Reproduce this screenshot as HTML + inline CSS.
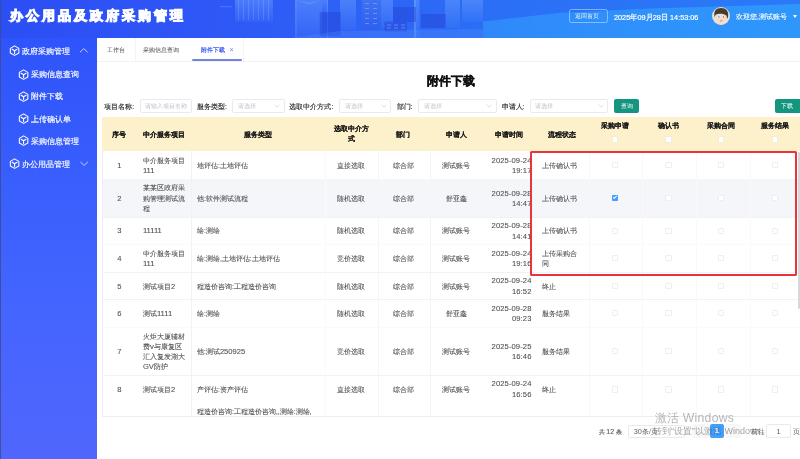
<!DOCTYPE html>
<html><head><meta charset="utf-8">
<style>
*{margin:0;padding:0;box-sizing:border-box}
html,body{width:800px;height:459px;overflow:hidden;background:#fff;font-family:"Liberation Sans",sans-serif;color:#606266}
.a{position:absolute;white-space:nowrap}
#hdr{position:absolute;left:0;top:0;width:800px;height:38px;overflow:hidden}
#side{position:absolute;left:0;top:38px;width:97px;height:421px;background:linear-gradient(180deg,#2e54fb 0%,#3a60fd 40%,#4565ff 65%,#5066fc 100%)}
.n{font-size:1.12em;line-height:1px}
.side-item{position:absolute;color:#fff;font-size:7.95px;line-height:10px;-webkit-text-stroke:0.15px #fff}
#main{position:absolute;left:97px;top:38px;width:703px;height:421px;background:#fff;overflow:hidden;will-change:transform}
#hdr,#side{will-change:transform}
</style></head><body>
<div id="hdr">
<svg class="a" style="left:0;top:0" width="800" height="38" viewBox="0 0 800 38">
<defs>
<linearGradient id="hg" x1="0" y1="0" x2="1" y2="0">
<stop offset="0" stop-color="#2c4ef5"/><stop offset="0.25" stop-color="#2f56f6"/><stop offset="0.5" stop-color="#2d66f7"/><stop offset="0.62" stop-color="#2a6ff6"/><stop offset="1" stop-color="#2a7af8"/>
</linearGradient>
<linearGradient id="hl" x1="0" y1="0" x2="1" y2="0" gradientUnits="objectBoundingBox">
<stop offset="0" stop-color="#2f88fa"/><stop offset="0.4" stop-color="#2f90fb"/><stop offset="1" stop-color="#2e97fc"/>
</linearGradient>
<linearGradient id="fade" x1="0" y1="0" x2="0" y2="1">
<stop offset="0" stop-color="#70a4ff" stop-opacity="0.45"/><stop offset="1" stop-color="#70a4ff" stop-opacity="0.08"/>
</linearGradient>
<filter id="bl" x="-5%" y="-50%" width="110%" height="200%"><feGaussianBlur stdDeviation="0.6"/></filter>
</defs>
<rect width="800" height="38" fill="url(#hg)"/>
<polygon points="483,38 483,21.5 560,12.7 650,8.5 800,4 800,38" fill="url(#hl)"/>
<g filter="url(#bl)">
<g fill="url(#fade)">
<rect x="235" y="0" width="38" height="22"/>
<rect x="295" y="0" width="27" height="38"/>
<rect x="322" y="0" width="6" height="14"/>
<rect x="340" y="0" width="16" height="30"/>
<rect x="362" y="0" width="19" height="30"/>
<rect x="381" y="0" width="12" height="28"/>
<rect x="414" y="0" width="5.5" height="38"/>
<rect x="445" y="0" width="15" height="28"/>
<rect x="462" y="0" width="21" height="22"/>
</g>
<g fill="#86b4ff" opacity="0.3">
<rect x="238" y="0" width="1" height="20"/><rect x="243" y="0" width="1" height="20"/><rect x="248" y="0" width="1" height="20"/><rect x="253" y="0" width="1" height="20"/><rect x="258" y="0" width="1" height="20"/><rect x="263" y="0" width="1" height="20"/><rect x="268" y="0" width="1" height="20"/>
<rect x="220" y="6" width="12" height="1.2"/>
<rect x="295.5" y="0" width="1" height="38"/><rect x="327" y="0" width="1" height="38"/>
<polygon points="296,0 309,4.5 322,0 309,2.5"/>
<rect x="414" y="0" width="2" height="38"/>
</g>
<g fill="#2243d0" opacity="0.45">
<rect x="319.7" y="12" width="21" height="24"/>
<rect x="393" y="7" width="23" height="15"/>
<rect x="421" y="14" width="24.7" height="14"/>
<rect x="384.5" y="21.7" width="22.5" height="9.8"/>
</g>
<g fill="#1f45d8" opacity="0.25">
<rect x="362" y="0" width="19" height="30"/>
</g>
<g fill="#9cc4ff" opacity="0.45">
<rect x="365" y="3" width="4" height="1"/><rect x="373" y="3" width="4" height="1"/>
<rect x="365" y="8" width="4" height="1"/><rect x="373" y="8" width="4" height="1"/>
<rect x="365" y="13" width="4" height="1"/><rect x="373" y="13" width="4" height="1"/>
<rect x="365" y="18" width="4" height="1"/><rect x="373" y="18" width="4" height="1"/>
<rect x="365" y="23" width="4" height="1"/><rect x="373" y="23" width="4" height="1"/>
<rect x="387" y="24.5" width="4" height="1"/><rect x="394" y="24.5" width="4" height="1"/><rect x="401" y="24.5" width="4" height="1"/>
<rect x="387" y="27.5" width="4" height="1"/><rect x="394" y="27.5" width="4" height="1"/><rect x="401" y="27.5" width="4" height="1"/>
</g>
<polygon points="290,38 340,31 483,29 483,38" fill="#5a96ff" opacity="0.25"/>
</g>
<rect x="0" y="0" width="1.1" height="38" fill="#3a4a8a" opacity="0.7"/>
</svg>
<div class="a" style="left:9.8px;top:5.8px;font-size:13px;line-height:20px;color:#fff;font-weight:bold;letter-spacing:3.05px;-webkit-text-stroke:1.05px #fff">办公用品及政府采购管理</div>
<div class="a" style="left:568.5px;top:9px;width:39.5px;height:14.3px;border:0.8px solid rgba(255,255,255,0.42);border-radius:2.5px"></div>
<div class="a" style="left:575.4px;top:11.3px;font-size:6.35px;line-height:10px;color:rgba(255,255,255,0.92)">返回首页</div>
<div class="a" style="left:614.2px;top:12.6px;font-size:8.1px;line-height:10px;color:#fff;-webkit-text-stroke:0.2px #fff;transform:scaleX(0.9);transform-origin:0 0">2025年09月28日 14:53:06</div>
<svg class="a" style="left:711.6px;top:7px" width="18" height="18" viewBox="0 0 20 20">
<defs><clipPath id="av"><circle cx="10" cy="10" r="10"/></clipPath></defs>
<g clip-path="url(#av)">
<rect width="20" height="20" fill="#e4e0dc"/>
<path d="M3.5 10 Q3.5 18 10 20 Q16.5 19 16.5 10 Z" fill="#f2dccc"/>
<circle cx="16.3" cy="11.5" r="1.6" fill="#efc7a8"/>
<path d="M2.5 9 Q2 1 10 1 Q18.5 1 18 10 L17.4 13 L16 9.5 Q13 8 11 7.6 Q7 7 4 8.5 L3 11 Z" fill="#4a3a2c"/>
<ellipse cx="7.7" cy="11" rx="1.6" ry="1" fill="#fff"/><ellipse cx="12.6" cy="11" rx="1.6" ry="1" fill="#fff"/>
<circle cx="7.7" cy="11" r="0.65" fill="#2a2a2a"/><circle cx="12.6" cy="11" r="0.65" fill="#2a2a2a"/>
<ellipse cx="10.2" cy="15.2" rx="1.6" ry="1" fill="#f0a08a"/>
</g>
</svg>
<div class="a" style="left:736px;top:11.6px;font-size:6.8px;line-height:10px;color:#fff;-webkit-text-stroke:0.1px #fff">欢迎您,测试账号</div>
<div class="a" style="left:793px;top:15px;width:0;height:0;border-left:2.5px solid transparent;border-right:2.5px solid transparent;border-top:3px solid #fff"></div>
</div>
<div id="side">
<svg class="a" style="left:9.2px;top:7.2px" width="11.2" height="11.2" viewBox="0 0 20 20"><path d="M10 1.6 L17.6 6 V14.4 L10 18.6 L2.4 14.4 V6 Z" fill="none" stroke="#fff" stroke-width="1.9" stroke-linejoin="round"/><path d="M5.6 7.6 L10 10.4 L14.4 7.6 M10 10.4 V15" fill="none" stroke="#fff" stroke-width="1.9" stroke-linecap="round" stroke-linejoin="round"/></svg>
<div class="side-item a" style="left:21.7px;top:8.8px">政府采购管理</div>
<svg class="a" style="left:79px;top:8px" width="10" height="8" viewBox="0 0 10 8"><polyline points="1,6.2 4.8,2.6 8.6,6.2" fill="none" stroke="rgba(255,255,255,0.9)" stroke-width="0.8"/></svg>
<svg class="a" style="left:18.0px;top:30.799999999999994px" width="11.2" height="11.2" viewBox="0 0 20 20"><path d="M10 1.6 L17.6 6 V14.4 L10 18.6 L2.4 14.4 V6 Z" fill="none" stroke="#fff" stroke-width="1.9" stroke-linejoin="round"/><path d="M5.6 7.6 L10 10.4 L14.4 7.6 M10 10.4 V15" fill="none" stroke="#fff" stroke-width="1.9" stroke-linecap="round" stroke-linejoin="round"/></svg>
<div class="side-item a" style="left:30.5px;top:32.39999999999999px">采购信息查询</div>
<svg class="a" style="left:18.0px;top:52.8px" width="11.2" height="11.2" viewBox="0 0 20 20"><path d="M10 1.6 L17.6 6 V14.4 L10 18.6 L2.4 14.4 V6 Z" fill="none" stroke="#fff" stroke-width="1.9" stroke-linejoin="round"/><path d="M5.6 7.6 L10 10.4 L14.4 7.6 M10 10.4 V15" fill="none" stroke="#fff" stroke-width="1.9" stroke-linecap="round" stroke-linejoin="round"/></svg>
<div class="side-item a" style="left:30.5px;top:54.39999999999999px">附件下载</div>
<svg class="a" style="left:18.0px;top:75.0px" width="11.2" height="11.2" viewBox="0 0 20 20"><path d="M10 1.6 L17.6 6 V14.4 L10 18.6 L2.4 14.4 V6 Z" fill="none" stroke="#fff" stroke-width="1.9" stroke-linejoin="round"/><path d="M5.6 7.6 L10 10.4 L14.4 7.6 M10 10.4 V15" fill="none" stroke="#fff" stroke-width="1.9" stroke-linecap="round" stroke-linejoin="round"/></svg>
<div class="side-item a" style="left:30.5px;top:76.6px">上传确认单</div>
<svg class="a" style="left:18.0px;top:97.00000000000001px" width="11.2" height="11.2" viewBox="0 0 20 20"><path d="M10 1.6 L17.6 6 V14.4 L10 18.6 L2.4 14.4 V6 Z" fill="none" stroke="#fff" stroke-width="1.9" stroke-linejoin="round"/><path d="M5.6 7.6 L10 10.4 L14.4 7.6 M10 10.4 V15" fill="none" stroke="#fff" stroke-width="1.9" stroke-linecap="round" stroke-linejoin="round"/></svg>
<div class="side-item a" style="left:30.5px;top:98.60000000000001px">采购信息管理</div>
<svg class="a" style="left:9.2px;top:120.2px" width="11.2" height="11.2" viewBox="0 0 20 20"><path d="M10 1.6 L17.6 6 V14.4 L10 18.6 L2.4 14.4 V6 Z" fill="none" stroke="#fff" stroke-width="1.9" stroke-linejoin="round"/><path d="M5.6 7.6 L10 10.4 L14.4 7.6 M10 10.4 V15" fill="none" stroke="#fff" stroke-width="1.9" stroke-linecap="round" stroke-linejoin="round"/></svg>
<div class="side-item a" style="left:21.7px;top:121.8px">办公用品管理</div>
<svg class="a" style="left:79px;top:121px" width="10" height="8" viewBox="0 0 10 8"><polyline points="1.4,3 5.1,6.4 8.8,3" fill="none" stroke="rgba(255,255,255,0.9)" stroke-width="0.8"/></svg>
<div class="a" style="left:0;top:0;width:1.1px;height:421px;background:#3c4a8c;opacity:0.8"></div>
</div>
<div id="main">
<div class="a" style="left:0;top:22.6px;width:703px;height:0.7px;background:#f1f2f4"></div>
<div class="a" style="left:9.50px;top:6.60px;font-size:6.4px;line-height:10px;color:#444">工作台</div>
<div class="a" style="left:38.00px;top:0.00px;width:0.70px;height:23.00px;background:#f4f4f4"></div>
<div class="a" style="left:46.00px;top:6.60px;font-size:6.2px;line-height:10px;color:#444">采购信息查询</div>
<div class="a" style="left:103.50px;top:6.60px;font-size:6.2px;line-height:10px;color:#3d5cf0;font-weight:bold">附件下载</div>
<div class="a" style="left:132.50px;top:6.60px;font-size:7px;line-height:10px;color:#6a7cf0">×</div>
<div class="a" style="left:94.60px;top:20.90px;width:50.60px;height:1.70px;background:#7084de;border-radius:1px"></div>
<div class="a" style="left:146.00px;top:0.00px;width:0.70px;height:23.00px;background:#f4f4f4"></div>
<div class="a" style="left:329.90px;top:36.30px;font-size:12.2px;line-height:14px;color:#111;font-weight:bold;-webkit-text-stroke:0.35px #111">附件下载</div>
<div class="a" style="left:7.30px;top:63.50px;font-size:6.8px;line-height:10px;color:#262626;-webkit-text-stroke:0.15px #333">项目名称:</div>
<div class="a" style="left:43.30px;top:61.20px;width:51.70px;height:14.00px;border:0.8px solid #e9eaee;border-radius:2px;background:#fff"></div>
<div class="a" style="left:47.50px;top:63.30px;font-size:6.2px;line-height:10px;color:#c0c4cc">请输入项目名称</div>
<div class="a" style="left:100.10px;top:63.50px;font-size:6.8px;line-height:10px;color:#262626;-webkit-text-stroke:0.15px #333">服务类型:</div>
<div class="a" style="left:135.20px;top:61.20px;width:52.50px;height:14.00px;border:0.8px solid #e9eaee;border-radius:2px;background:#fff"></div>
<div class="a" style="left:140.70px;top:63.30px;font-size:6.2px;line-height:10px;color:#c0c4cc">请选择</div>
<svg class="a" style="left:176.70px;top:66.30px" width="6" height="4" viewBox="0 0 6 4"><polyline points="0.6,0.8 3,3.1 5.4,0.8" fill="none" stroke="#c6c8cc" stroke-width="0.6"/></svg>
<div class="a" style="left:192.40px;top:63.50px;font-size:6.8px;line-height:10px;color:#262626;-webkit-text-stroke:0.15px #333">选取中介方式:</div>
<div class="a" style="left:242.40px;top:61.20px;width:52.10px;height:14.00px;border:0.8px solid #e9eaee;border-radius:2px;background:#fff"></div>
<div class="a" style="left:247.90px;top:63.30px;font-size:6.2px;line-height:10px;color:#c0c4cc">请选择</div>
<svg class="a" style="left:283.50px;top:66.30px" width="6" height="4" viewBox="0 0 6 4"><polyline points="0.6,0.8 3,3.1 5.4,0.8" fill="none" stroke="#c6c8cc" stroke-width="0.6"/></svg>
<div class="a" style="left:299.60px;top:63.50px;font-size:6.8px;line-height:10px;color:#262626;-webkit-text-stroke:0.15px #333">部门:</div>
<div class="a" style="left:321.20px;top:61.20px;width:78.40px;height:14.00px;border:0.8px solid #e9eaee;border-radius:2px;background:#fff"></div>
<div class="a" style="left:326.70px;top:63.30px;font-size:6.2px;line-height:10px;color:#c0c4cc">请选择</div>
<svg class="a" style="left:388.60px;top:66.30px" width="6" height="4" viewBox="0 0 6 4"><polyline points="0.6,0.8 3,3.1 5.4,0.8" fill="none" stroke="#c6c8cc" stroke-width="0.6"/></svg>
<div class="a" style="left:404.50px;top:63.50px;font-size:6.8px;line-height:10px;color:#262626;-webkit-text-stroke:0.15px #333">申请人:</div>
<div class="a" style="left:432.70px;top:61.20px;width:78.80px;height:14.00px;border:0.8px solid #e9eaee;border-radius:2px;background:#fff"></div>
<div class="a" style="left:438.20px;top:63.30px;font-size:6.2px;line-height:10px;color:#c0c4cc">请选择</div>
<svg class="a" style="left:500.50px;top:66.30px" width="6" height="4" viewBox="0 0 6 4"><polyline points="0.6,0.8 3,3.1 5.4,0.8" fill="none" stroke="#c6c8cc" stroke-width="0.6"/></svg>
<div class="a" style="left:516.70px;top:61.00px;width:25.70px;height:14.00px;background:#14957f;border-radius:2px"></div>
<div class="a" style="left:516.70px;top:63.00px;width:25.7px;text-align:center;font-size:6.2px;line-height:10px;color:#fff">查询</div>
<div class="a" style="left:677.80px;top:61.00px;width:30.00px;height:14.00px;background:#14957f;border-radius:2px"></div>
<div class="a" style="left:677.80px;top:63.00px;width:25px;text-align:center;font-size:6.2px;line-height:10px;color:#fff">下载</div>
<div class="a" style="left:5.40px;top:79.20px;width:697.60px;height:34.20px;background:#fdf1cb"></div>
<div class="a" style="left:5.40px;top:113.30px;width:697.60px;height:265.50px;border-left:0.7px solid #eceef2;border-bottom:0.7px solid #eceef2;background:#fff"></div>
<div class="a" style="left:5.40px;top:140.55px;width:697.60px;height:0.70px;background:#f1f2f5"></div>
<div class="a" style="left:6.10px;top:140.90px;width:696.90px;height:38.10px;background:#f4f6fa"></div>
<div class="a" style="left:5.40px;top:178.65px;width:697.60px;height:0.70px;background:#f1f2f5"></div>
<div class="a" style="left:5.40px;top:206.05px;width:697.60px;height:0.70px;background:#f9fafb"></div>
<div class="a" style="left:5.40px;top:233.75px;width:697.60px;height:0.70px;background:#f1f2f5"></div>
<div class="a" style="left:5.40px;top:261.15px;width:697.60px;height:0.70px;background:#f1f2f5"></div>
<div class="a" style="left:5.40px;top:288.65px;width:697.60px;height:0.70px;background:#f9fafb"></div>
<div class="a" style="left:5.40px;top:337.15px;width:697.60px;height:0.70px;background:#f1f2f5"></div>
<div class="a" style="left:94.00px;top:113.30px;width:0.70px;height:264.70px;background:#f1f2f5"></div>
<div class="a" style="left:228.00px;top:113.30px;width:0.70px;height:264.70px;background:#fafafb"></div>
<div class="a" style="left:280.50px;top:113.30px;width:0.70px;height:264.70px;background:#f4f5f7"></div>
<div class="a" style="left:332.50px;top:113.30px;width:0.70px;height:264.70px;background:#f3f4f6"></div>
<div class="a" style="left:492.00px;top:113.30px;width:0.70px;height:264.70px;background:#f6f7f9"></div>
<div class="a" style="left:544.50px;top:113.30px;width:0.70px;height:264.70px;background:#f9f9fa"></div>
<div class="a" style="left:598.50px;top:113.30px;width:0.70px;height:264.70px;background:#f9f9fa"></div>
<div class="a" style="left:652.50px;top:113.30px;width:0.70px;height:264.70px;background:#f9f9fa"></div>
<div class="a" style="left:-7.60px;top:91.80px;font-size:6.8px;line-height:10.4px;color:#1a1a1a;font-weight:bold;text-align:center;-webkit-text-stroke:0.1px #1a1a1a;width:60px">序号</div>
<div class="a" style="left:37.20px;top:91.80px;font-size:6.8px;line-height:10.4px;color:#1a1a1a;font-weight:bold;text-align:center;-webkit-text-stroke:0.1px #1a1a1a;width:60px">中介服务项目</div>
<div class="a" style="left:131.00px;top:91.80px;font-size:6.8px;line-height:10.4px;color:#1a1a1a;font-weight:bold;text-align:center;-webkit-text-stroke:0.1px #1a1a1a;width:60px">服务类型</div>
<div class="a" style="left:229.00px;top:85.80px;font-size:6.8px;line-height:10.4px;color:#1a1a1a;font-weight:bold;text-align:center;-webkit-text-stroke:0.1px #1a1a1a;width:50px">选取中介方<br>式</div>
<div class="a" style="left:276.30px;top:91.80px;font-size:6.8px;line-height:10.4px;color:#1a1a1a;font-weight:bold;text-align:center;-webkit-text-stroke:0.1px #1a1a1a;width:60px">部门</div>
<div class="a" style="left:329.30px;top:91.80px;font-size:6.8px;line-height:10.4px;color:#1a1a1a;font-weight:bold;text-align:center;-webkit-text-stroke:0.1px #1a1a1a;width:60px">申请人</div>
<div class="a" style="left:382.20px;top:91.80px;font-size:6.8px;line-height:10.4px;color:#1a1a1a;font-weight:bold;text-align:center;-webkit-text-stroke:0.1px #1a1a1a;width:60px">申请时间</div>
<div class="a" style="left:435.00px;top:91.80px;font-size:6.8px;line-height:10.4px;color:#1a1a1a;font-weight:bold;text-align:center;-webkit-text-stroke:0.1px #1a1a1a;width:60px">流程状态</div>
<div class="a" style="left:488.20px;top:82.80px;font-size:6.8px;line-height:10.4px;color:#1a1a1a;font-weight:bold;text-align:center;-webkit-text-stroke:0.1px #1a1a1a;width:60px">采购申请</div>
<div class="a" style="left:515.00px;top:98.30px;width:6.40px;height:6.40px;border:0.6px solid #f1ecdc;border-radius:1px;background:#fff"></div>
<div class="a" style="left:541.50px;top:82.80px;font-size:6.8px;line-height:10.4px;color:#1a1a1a;font-weight:bold;text-align:center;-webkit-text-stroke:0.1px #1a1a1a;width:60px">确认书</div>
<div class="a" style="left:568.30px;top:98.30px;width:6.40px;height:6.40px;border:0.6px solid #f1ecdc;border-radius:1px;background:#fff"></div>
<div class="a" style="left:594.30px;top:82.80px;font-size:6.8px;line-height:10.4px;color:#1a1a1a;font-weight:bold;text-align:center;-webkit-text-stroke:0.1px #1a1a1a;width:60px">采购合同</div>
<div class="a" style="left:621.10px;top:98.30px;width:6.40px;height:6.40px;border:0.6px solid #f1ecdc;border-radius:1px;background:#fff"></div>
<div class="a" style="left:647.80px;top:82.80px;font-size:6.8px;line-height:10.4px;color:#1a1a1a;font-weight:bold;text-align:center;-webkit-text-stroke:0.1px #1a1a1a;width:60px">服务结果</div>
<div class="a" style="left:674.60px;top:98.30px;width:6.40px;height:6.40px;border:0.6px solid #f1ecdc;border-radius:1px;background:#fff"></div>
<div class="a" style="left:12.40px;top:122.85px;font-size:6.8px;line-height:10.2px;color:#505050;-webkit-text-stroke:0.08px #505050;width:20px;text-align:center"><span class="n">1</span></div>
<div class="a" style="left:45.90px;top:117.75px;font-size:6.8px;line-height:10.2px;color:#505050;-webkit-text-stroke:0.08px #505050">中介服务项目<br><span class="n">111</span></div>
<div class="a" style="left:100.00px;top:122.85px;font-size:6.8px;line-height:10.2px;color:#505050;-webkit-text-stroke:0.08px #505050">地评估:土地评估</div>
<div class="a" style="left:228.50px;top:122.85px;font-size:6.8px;line-height:10.2px;color:#505050;-webkit-text-stroke:0.08px #505050;width:50px;text-align:center">直接选取</div>
<div class="a" style="left:286.80px;top:122.85px;font-size:6.8px;line-height:10.2px;color:#505050;-webkit-text-stroke:0.08px #505050;width:40px;text-align:center">综合部</div>
<div class="a" style="left:339.20px;top:122.85px;font-size:6.8px;line-height:10.2px;color:#505050;-webkit-text-stroke:0.08px #505050;width:40px;text-align:center">测试账号</div>
<div class="a" style="left:384.50px;top:117.75px;font-size:6.8px;line-height:10.2px;color:#505050;letter-spacing:0.1px;-webkit-text-stroke:0.08px #505050;width:50px;text-align:right"><span class="n">2025-09-24</span><br><span class="n">19:17</span></div>
<div class="a" style="left:444.80px;top:122.85px;font-size:6.8px;line-height:10.2px;color:#505050;-webkit-text-stroke:0.08px #505050">上传确认书</div>
<div class="a" style="left:12.40px;top:155.65px;font-size:6.8px;line-height:10.2px;color:#505050;-webkit-text-stroke:0.08px #505050;width:20px;text-align:center"><span class="n">2</span></div>
<div class="a" style="left:45.90px;top:145.45px;font-size:6.8px;line-height:10.2px;color:#505050;-webkit-text-stroke:0.08px #505050">某某区政府采<br>购管理测试流<br>程</div>
<div class="a" style="left:100.00px;top:155.65px;font-size:6.8px;line-height:10.2px;color:#505050;-webkit-text-stroke:0.08px #505050">他:软件测试流程</div>
<div class="a" style="left:228.50px;top:155.65px;font-size:6.8px;line-height:10.2px;color:#505050;-webkit-text-stroke:0.08px #505050;width:50px;text-align:center">随机选取</div>
<div class="a" style="left:286.80px;top:155.65px;font-size:6.8px;line-height:10.2px;color:#505050;-webkit-text-stroke:0.08px #505050;width:40px;text-align:center">综合部</div>
<div class="a" style="left:339.20px;top:155.65px;font-size:6.8px;line-height:10.2px;color:#505050;-webkit-text-stroke:0.08px #505050;width:40px;text-align:center">舒亚鑫</div>
<div class="a" style="left:384.50px;top:150.55px;font-size:6.8px;line-height:10.2px;color:#505050;letter-spacing:0.1px;-webkit-text-stroke:0.08px #505050;width:50px;text-align:right"><span class="n">2025-09-28</span><br><span class="n">14:47</span></div>
<div class="a" style="left:444.80px;top:155.65px;font-size:6.8px;line-height:10.2px;color:#505050;-webkit-text-stroke:0.08px #505050">上传确认书</div>
<div class="a" style="left:12.40px;top:188.40px;font-size:6.8px;line-height:10.2px;color:#505050;-webkit-text-stroke:0.08px #505050;width:20px;text-align:center"><span class="n">3</span></div>
<div class="a" style="left:45.90px;top:188.40px;font-size:6.8px;line-height:10.2px;color:#505050;-webkit-text-stroke:0.08px #505050"><span class="n">11111</span></div>
<div class="a" style="left:100.00px;top:188.40px;font-size:6.8px;line-height:10.2px;color:#505050;-webkit-text-stroke:0.08px #505050">绘:测绘</div>
<div class="a" style="left:228.50px;top:188.40px;font-size:6.8px;line-height:10.2px;color:#505050;-webkit-text-stroke:0.08px #505050;width:50px;text-align:center">随机选取</div>
<div class="a" style="left:286.80px;top:188.40px;font-size:6.8px;line-height:10.2px;color:#505050;-webkit-text-stroke:0.08px #505050;width:40px;text-align:center">综合部</div>
<div class="a" style="left:339.20px;top:188.40px;font-size:6.8px;line-height:10.2px;color:#505050;-webkit-text-stroke:0.08px #505050;width:40px;text-align:center">测试账号</div>
<div class="a" style="left:384.50px;top:183.30px;font-size:6.8px;line-height:10.2px;color:#505050;letter-spacing:0.1px;-webkit-text-stroke:0.08px #505050;width:50px;text-align:right"><span class="n">2025-09-28</span><br><span class="n">14:41</span></div>
<div class="a" style="left:444.80px;top:188.40px;font-size:6.8px;line-height:10.2px;color:#505050;-webkit-text-stroke:0.08px #505050">上传确认书</div>
<div class="a" style="left:12.40px;top:215.95px;font-size:6.8px;line-height:10.2px;color:#505050;-webkit-text-stroke:0.08px #505050;width:20px;text-align:center"><span class="n">4</span></div>
<div class="a" style="left:45.90px;top:210.85px;font-size:6.8px;line-height:10.2px;color:#505050;-webkit-text-stroke:0.08px #505050">中介服务项目<br><span class="n">111</span></div>
<div class="a" style="left:100.00px;top:215.95px;font-size:6.8px;line-height:10.2px;color:#505050;-webkit-text-stroke:0.08px #505050">绘:测绘,土地评估:土地评估</div>
<div class="a" style="left:228.50px;top:215.95px;font-size:6.8px;line-height:10.2px;color:#505050;-webkit-text-stroke:0.08px #505050;width:50px;text-align:center">竞价选取</div>
<div class="a" style="left:286.80px;top:215.95px;font-size:6.8px;line-height:10.2px;color:#505050;-webkit-text-stroke:0.08px #505050;width:40px;text-align:center">综合部</div>
<div class="a" style="left:339.20px;top:215.95px;font-size:6.8px;line-height:10.2px;color:#505050;-webkit-text-stroke:0.08px #505050;width:40px;text-align:center">测试账号</div>
<div class="a" style="left:384.50px;top:210.85px;font-size:6.8px;line-height:10.2px;color:#505050;letter-spacing:0.1px;-webkit-text-stroke:0.08px #505050;width:50px;text-align:right"><span class="n">2025-09-24</span><br><span class="n">19:16</span></div>
<div class="a" style="left:444.80px;top:210.85px;font-size:6.8px;line-height:10.2px;color:#505050;-webkit-text-stroke:0.08px #505050">上传采购合<br>同</div>
<div class="a" style="left:12.40px;top:243.50px;font-size:6.8px;line-height:10.2px;color:#505050;-webkit-text-stroke:0.08px #505050;width:20px;text-align:center"><span class="n">5</span></div>
<div class="a" style="left:45.90px;top:243.50px;font-size:6.8px;line-height:10.2px;color:#505050;-webkit-text-stroke:0.08px #505050">测试项目<span class="n">2</span></div>
<div class="a" style="left:100.00px;top:243.50px;font-size:6.8px;line-height:10.2px;color:#505050;-webkit-text-stroke:0.08px #505050">程造价咨询:工程造价咨询</div>
<div class="a" style="left:228.50px;top:243.50px;font-size:6.8px;line-height:10.2px;color:#505050;-webkit-text-stroke:0.08px #505050;width:50px;text-align:center">随机选取</div>
<div class="a" style="left:286.80px;top:243.50px;font-size:6.8px;line-height:10.2px;color:#505050;-webkit-text-stroke:0.08px #505050;width:40px;text-align:center">综合部</div>
<div class="a" style="left:339.20px;top:243.50px;font-size:6.8px;line-height:10.2px;color:#505050;-webkit-text-stroke:0.08px #505050;width:40px;text-align:center">测试账号</div>
<div class="a" style="left:384.50px;top:238.40px;font-size:6.8px;line-height:10.2px;color:#505050;letter-spacing:0.1px;-webkit-text-stroke:0.08px #505050;width:50px;text-align:right"><span class="n">2025-09-24</span><br><span class="n">16:52</span></div>
<div class="a" style="left:444.80px;top:243.50px;font-size:6.8px;line-height:10.2px;color:#505050;-webkit-text-stroke:0.08px #505050">终止</div>
<div class="a" style="left:12.40px;top:270.95px;font-size:6.8px;line-height:10.2px;color:#505050;-webkit-text-stroke:0.08px #505050;width:20px;text-align:center"><span class="n">6</span></div>
<div class="a" style="left:45.90px;top:270.95px;font-size:6.8px;line-height:10.2px;color:#505050;-webkit-text-stroke:0.08px #505050">测试<span class="n">1111</span></div>
<div class="a" style="left:100.00px;top:270.95px;font-size:6.8px;line-height:10.2px;color:#505050;-webkit-text-stroke:0.08px #505050">绘:测绘</div>
<div class="a" style="left:228.50px;top:270.95px;font-size:6.8px;line-height:10.2px;color:#505050;-webkit-text-stroke:0.08px #505050;width:50px;text-align:center">随机选取</div>
<div class="a" style="left:286.80px;top:270.95px;font-size:6.8px;line-height:10.2px;color:#505050;-webkit-text-stroke:0.08px #505050;width:40px;text-align:center">综合部</div>
<div class="a" style="left:339.20px;top:270.95px;font-size:6.8px;line-height:10.2px;color:#505050;-webkit-text-stroke:0.08px #505050;width:40px;text-align:center">舒亚鑫</div>
<div class="a" style="left:384.50px;top:265.85px;font-size:6.8px;line-height:10.2px;color:#505050;letter-spacing:0.1px;-webkit-text-stroke:0.08px #505050;width:50px;text-align:right"><span class="n">2025-09-28</span><br><span class="n">09:23</span></div>
<div class="a" style="left:444.80px;top:270.95px;font-size:6.8px;line-height:10.2px;color:#505050;-webkit-text-stroke:0.08px #505050">服务结果</div>
<div class="a" style="left:12.40px;top:308.95px;font-size:6.8px;line-height:10.2px;color:#505050;-webkit-text-stroke:0.08px #505050;width:20px;text-align:center"><span class="n">7</span></div>
<div class="a" style="left:45.90px;top:293.65px;font-size:6.8px;line-height:10.2px;color:#505050;-webkit-text-stroke:0.08px #505050">火炬大厦辅材<br>费<span class="n">v</span>与康复区<br>汇入复发湖大<br><span class="n">GV</span>防护</div>
<div class="a" style="left:100.00px;top:308.95px;font-size:6.8px;line-height:10.2px;color:#505050;-webkit-text-stroke:0.08px #505050">他:测试<span class="n">250925</span></div>
<div class="a" style="left:228.50px;top:308.95px;font-size:6.8px;line-height:10.2px;color:#505050;-webkit-text-stroke:0.08px #505050;width:50px;text-align:center">竞价选取</div>
<div class="a" style="left:286.80px;top:308.95px;font-size:6.8px;line-height:10.2px;color:#505050;-webkit-text-stroke:0.08px #505050;width:40px;text-align:center">综合部</div>
<div class="a" style="left:339.20px;top:308.95px;font-size:6.8px;line-height:10.2px;color:#505050;-webkit-text-stroke:0.08px #505050;width:40px;text-align:center">测试账号</div>
<div class="a" style="left:384.50px;top:303.85px;font-size:6.8px;line-height:10.2px;color:#505050;letter-spacing:0.1px;-webkit-text-stroke:0.08px #505050;width:50px;text-align:right"><span class="n">2025-09-25</span><br><span class="n">16:46</span></div>
<div class="a" style="left:444.80px;top:308.95px;font-size:6.8px;line-height:10.2px;color:#505050;-webkit-text-stroke:0.08px #505050">服务结果</div>
<div class="a" style="left:12.40px;top:346.50px;font-size:6.8px;line-height:10.2px;color:#505050;-webkit-text-stroke:0.08px #505050;width:20px;text-align:center"><span class="n">8</span></div>
<div class="a" style="left:45.90px;top:346.50px;font-size:6.8px;line-height:10.2px;color:#505050;-webkit-text-stroke:0.08px #505050">测试项目<span class="n">2</span></div>
<div class="a" style="left:100.00px;top:346.50px;font-size:6.8px;line-height:10.2px;color:#505050;-webkit-text-stroke:0.08px #505050">产评估:资产评估</div>
<div class="a" style="left:100.00px;top:369.00px;font-size:6.8px;line-height:10.2px;color:#505050;-webkit-text-stroke:0.08px #505050">程造价咨询:工程造价咨询,,测绘:测绘,</div>
<div class="a" style="left:228.50px;top:346.50px;font-size:6.8px;line-height:10.2px;color:#505050;-webkit-text-stroke:0.08px #505050;width:50px;text-align:center">直接选取</div>
<div class="a" style="left:286.80px;top:346.50px;font-size:6.8px;line-height:10.2px;color:#505050;-webkit-text-stroke:0.08px #505050;width:40px;text-align:center">综合部</div>
<div class="a" style="left:339.20px;top:346.50px;font-size:6.8px;line-height:10.2px;color:#505050;-webkit-text-stroke:0.08px #505050;width:40px;text-align:center">测试账号</div>
<div class="a" style="left:384.50px;top:341.40px;font-size:6.8px;line-height:10.2px;color:#505050;letter-spacing:0.1px;-webkit-text-stroke:0.08px #505050;width:50px;text-align:right"><span class="n">2025-09-24</span><br><span class="n">16:56</span></div>
<div class="a" style="left:444.80px;top:346.50px;font-size:6.8px;line-height:10.2px;color:#505050;-webkit-text-stroke:0.08px #505050">终止</div>
<div class="a" style="left:515.00px;top:123.95px;width:6.40px;height:6.40px;border:0.6px solid #eceef1;border-radius:1px;background:#fff"></div>
<div class="a" style="left:568.30px;top:123.95px;width:6.40px;height:6.40px;border:0.6px solid #eceef1;border-radius:1px;background:#fff"></div>
<div class="a" style="left:621.10px;top:123.95px;width:6.40px;height:6.40px;border:0.6px solid #eceef1;border-radius:1px;background:#fff"></div>
<div class="a" style="left:674.60px;top:123.95px;width:6.40px;height:6.40px;border:0.6px solid #eceef1;border-radius:1px;background:#fff"></div>
<div class="a" style="left:515.20px;top:156.95px;width:6.00px;height:6.00px;background:#409eff;border-radius:1px"></div>
<div class="a" style="left:516.90px;top:157.35px;width:2.2px;height:3.8px;border-right:0.8px solid #fff;border-bottom:0.8px solid #fff;transform:rotate(45deg)"></div>
<div class="a" style="left:568.30px;top:156.75px;width:6.40px;height:6.40px;border:0.6px solid #eceef1;border-radius:1px;background:#fff"></div>
<div class="a" style="left:621.10px;top:156.75px;width:6.40px;height:6.40px;border:0.6px solid #eceef1;border-radius:1px;background:#fff"></div>
<div class="a" style="left:674.60px;top:156.75px;width:6.40px;height:6.40px;border:0.6px solid #eceef1;border-radius:1px;background:#fff"></div>
<div class="a" style="left:515.00px;top:189.50px;width:6.40px;height:6.40px;border:0.6px solid #eceef1;border-radius:1px;background:#fff"></div>
<div class="a" style="left:568.30px;top:189.50px;width:6.40px;height:6.40px;border:0.6px solid #eceef1;border-radius:1px;background:#fff"></div>
<div class="a" style="left:621.10px;top:189.50px;width:6.40px;height:6.40px;border:0.6px solid #eceef1;border-radius:1px;background:#fff"></div>
<div class="a" style="left:674.60px;top:189.50px;width:6.40px;height:6.40px;border:0.6px solid #eceef1;border-radius:1px;background:#fff"></div>
<div class="a" style="left:515.00px;top:217.05px;width:6.40px;height:6.40px;border:0.6px solid #eceef1;border-radius:1px;background:#fff"></div>
<div class="a" style="left:568.30px;top:217.05px;width:6.40px;height:6.40px;border:0.6px solid #eceef1;border-radius:1px;background:#fff"></div>
<div class="a" style="left:621.10px;top:217.05px;width:6.40px;height:6.40px;border:0.6px solid #eceef1;border-radius:1px;background:#fff"></div>
<div class="a" style="left:674.60px;top:217.05px;width:6.40px;height:6.40px;border:0.6px solid #eceef1;border-radius:1px;background:#fff"></div>
<div class="a" style="left:515.00px;top:244.60px;width:6.40px;height:6.40px;border:0.6px solid #eceef1;border-radius:1px;background:#fff"></div>
<div class="a" style="left:568.30px;top:244.60px;width:6.40px;height:6.40px;border:0.6px solid #eceef1;border-radius:1px;background:#fff"></div>
<div class="a" style="left:621.10px;top:244.60px;width:6.40px;height:6.40px;border:0.6px solid #eceef1;border-radius:1px;background:#fff"></div>
<div class="a" style="left:674.60px;top:244.60px;width:6.40px;height:6.40px;border:0.6px solid #eceef1;border-radius:1px;background:#fff"></div>
<div class="a" style="left:515.00px;top:272.05px;width:6.40px;height:6.40px;border:0.6px solid #eceef1;border-radius:1px;background:#fff"></div>
<div class="a" style="left:568.30px;top:272.05px;width:6.40px;height:6.40px;border:0.6px solid #eceef1;border-radius:1px;background:#fff"></div>
<div class="a" style="left:621.10px;top:272.05px;width:6.40px;height:6.40px;border:0.6px solid #eceef1;border-radius:1px;background:#fff"></div>
<div class="a" style="left:674.60px;top:272.05px;width:6.40px;height:6.40px;border:0.6px solid #eceef1;border-radius:1px;background:#fff"></div>
<div class="a" style="left:515.00px;top:310.05px;width:6.40px;height:6.40px;border:0.6px solid #eceef1;border-radius:1px;background:#fff"></div>
<div class="a" style="left:568.30px;top:310.05px;width:6.40px;height:6.40px;border:0.6px solid #eceef1;border-radius:1px;background:#fff"></div>
<div class="a" style="left:621.10px;top:310.05px;width:6.40px;height:6.40px;border:0.6px solid #eceef1;border-radius:1px;background:#fff"></div>
<div class="a" style="left:674.60px;top:310.05px;width:6.40px;height:6.40px;border:0.6px solid #eceef1;border-radius:1px;background:#fff"></div>
<div class="a" style="left:515.00px;top:348.40px;width:6.40px;height:6.40px;border:0.6px solid #eceef1;border-radius:1px;background:#fff"></div>
<div class="a" style="left:568.30px;top:348.40px;width:6.40px;height:6.40px;border:0.6px solid #eceef1;border-radius:1px;background:#fff"></div>
<div class="a" style="left:621.10px;top:348.40px;width:6.40px;height:6.40px;border:0.6px solid #eceef1;border-radius:1px;background:#fff"></div>
<div class="a" style="left:674.60px;top:348.40px;width:6.40px;height:6.40px;border:0.6px solid #eceef1;border-radius:1px;background:#fff"></div>
<div class="a" style="left:433.30px;top:113.30px;width:266.30px;height:125.00px;border:2px solid #e8343a;border-radius:1.5px"></div>
<div class="a" style="left:700.50px;top:113.80px;width:2.50px;height:157.00px;background:#d6d7d9;border-radius:1px"></div>
<div class="a" style="left:501.60px;top:388.90px;font-size:6.2px;line-height:10px;color:#555;-webkit-text-stroke:0.1px #555">共 <span class="n">12</span> 条</div>
<div class="a" style="left:531.30px;top:387.00px;width:56.70px;height:12.70px;border:0.8px solid #e9eaee;border-radius:2px;background:#fff"></div>
<div class="a" style="left:536.70px;top:388.70px;font-size:6.6px;line-height:10px;color:#606266"><span class="n">30</span>条/页</div>
<div class="a" style="left:595.40px;top:386.20px;width:16.50px;height:13.40px;background:#f7f7f8;border-radius:2px"></div>
<div class="a" style="left:613.00px;top:386.20px;width:13.60px;height:13.40px;background:#409eff;border-radius:2px"></div>
<div class="a" style="left:613.00px;top:388.20px;font-size:6.6px;line-height:10px;color:#606266;width:13.6px;text-align:center;color:#fff;font-weight:bold"><span class="n">1</span></div>
<div class="a" style="left:628.00px;top:386.20px;width:16.00px;height:13.40px;background:#f7f7f8;border-radius:2px"></div>
<div class="a" style="left:654.00px;top:388.70px;font-size:6.6px;line-height:10px;color:#606266">前往</div>
<div class="a" style="left:669.40px;top:386.40px;width:24.40px;height:13.40px;border:0.8px solid #e9eaee;border-radius:2px;background:#fff"></div>
<div class="a" style="left:669.40px;top:388.70px;font-size:6.6px;line-height:10px;color:#606266;width:24.4px;text-align:center"><span class="n">1</span></div>
<div class="a" style="left:695.50px;top:388.70px;font-size:6.6px;line-height:10px;color:#606266">页</div>
<div class="a" style="left:558.30px;top:372.60px;font-size:12.2px;line-height:14px;color:rgba(110,110,110,0.5)">激活 <span style="letter-spacing:0.3px">Windows</span></div>
<div class="a" style="left:556.00px;top:387.30px;font-size:9px;line-height:12px;color:rgba(90,90,90,0.55)">转到“设置”以激活 Windows。</div>
</div>
</body></html>
